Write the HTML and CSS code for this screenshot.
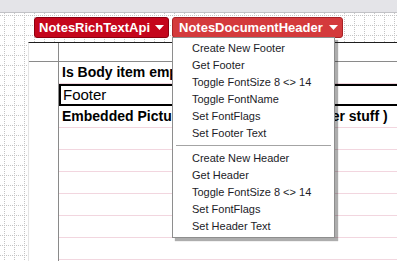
FILE: index.html
```html
<!DOCTYPE html>
<html lang="en">
<head>
<meta charset="UTF-8" />
<meta name="viewport" content="width=device-width, initial-scale=1" />
<title>Rich Text Demo</title>
<link rel="stylesheet" href="styles.css">
</head>
<body>

<div class="topbar"></div>

<div class="canvas">
  <div class="toolbar">
    <div class="dropdown">
      <button class="menu-btn">NotesRichTextApi
        <svg class="caret" width="9" height="5" viewBox="0 0 9 5"><polygon points="0,0 9,0 4.5,5" fill="#fff"/></svg>
      </button>
    </div>
    <div class="dropdown open">
      <button class="menu-btn active">NotesDocumentHeader
        <svg class="caret" width="9" height="5" viewBox="0 0 9 5"><polygon points="0,0 9,0 4.5,5" fill="#fff"/></svg>
      </button>
      <ul class="menu" role="menu">
        <li>Create New Footer</li>
        <li>Get Footer</li>
        <li>Toggle FontSize 8 &lt;&gt; 14</li>
        <li>Toggle FontName</li>
        <li>Set FontFlags</li>
        <li>Set Footer Text</li>
        <li class="sep"></li>
        <li>Create New Header</li>
        <li>Get Header</li>
        <li>Toggle FontSize 8 &lt;&gt; 14</li>
        <li>Set FontFlags</li>
        <li>Set Header Text</li>
      </ul>
    </div>
  </div>

  <div class="sheet">
    <div class="gutter head"></div>
    <div class="col head"></div>
    <div class="gutter"></div>
    <div class="col">
      <div class="row first bold">Is Body item empty ?</div>
      <div class="row selected">Footer</div>
      <div class="row bold">Embedded Picture ( Table, Links and other stuff )</div>
      <div class="row"></div>
      <div class="row"></div>
      <div class="row"></div>
      <div class="row"></div>
      <div class="row"></div>
      <div class="row"></div>
    </div>
  </div>
</div>

</body>
</html>
```

FILE: styles.css
```css
html, body { margin: 0; height: 100%; overflow: hidden; }
body { font-family: "Liberation Sans", Arial, sans-serif; background: #fff; color: #000; }

.topbar { height: 12px; background: #e4e4e8; border-bottom: 1px solid #c2c2c6; }

/* dotted design grid: lines every 10px, every other pixel blanked */
.canvas {
  height: 248px;
  background-color: #fff;
  background-image:
    repeating-linear-gradient(to right, transparent 0 1px, #fff 1px 2px),
    repeating-linear-gradient(to bottom, transparent 0 1px, #fff 1px 2px),
    linear-gradient(to right, #c4c4c4 1px, transparent 1px),
    linear-gradient(to bottom, #c4c4c4 1px, transparent 1px);
  background-size: auto, auto, 10px 10px, 10px 10px;
  background-position: 0 0, 0 0, 4px 2px, 4px 2px;
}

.toolbar { display: flex; gap: 3px; padding: 4px 0 4px 34px; height: 21px; }
.dropdown { position: relative; }
.menu-btn {
  display: flex; align-items: center; gap: 5px;
  height: 21px; padding: 0 4px 0 4px; margin: 0;
  font-family: "Liberation Sans", Arial, sans-serif; font-size: 13px; font-weight: bold;
  color: #fff; background: #c5061c; border: 1px solid #8c0010; border-radius: 3px;
  cursor: pointer;
}
.menu-btn.active { background: #d43a3c; border-color: #a82226; padding: 0 4px 0 6px; gap: 6px; }
.caret { display: block; }

.menu {
  position: absolute; top: 20px; left: 0; z-index: 10;
  width: 161px; margin: 0; padding: 2px 0 2px; list-style: none;
  background: #fff; border: 1px solid #8e8e8e;
  box-shadow: 3px 3px 1px rgba(0,0,0,0.32);
  font-size: 11px; color: #1c1c28;
}
.menu li { height: 17px; line-height: 17px; padding-left: 19px; white-space: nowrap; cursor: default; }
.menu li.sep { height: 0; margin: 3px 3px 4px; border-top: 1px solid #a4a4a4; padding: 0; }

.sheet {
  display: grid; grid-template-columns: 29px 420px; grid-template-rows: 19px auto;
  margin-left: 28px; height: 220px;
  background: #fff; border-top: 1px solid #1e1e1e; border-left: 1px solid #e4e4e4;
}
.gutter.head, .col.head { border-bottom: 1px solid #8a8a8a; }
.col { border-left: 1px solid #8a8a8a; }

.row {
  box-sizing: border-box; height: 22px; line-height: 21px;
  padding-left: 3px; border-bottom: 1px solid #f2d6df;
  font-size: 14px; white-space: nowrap;
}
.row.bold { font-weight: bold; }
.row.selected {
  border: 2px solid #000; padding-left: 2px; line-height: 18px; font-size: 15px;
}
```
